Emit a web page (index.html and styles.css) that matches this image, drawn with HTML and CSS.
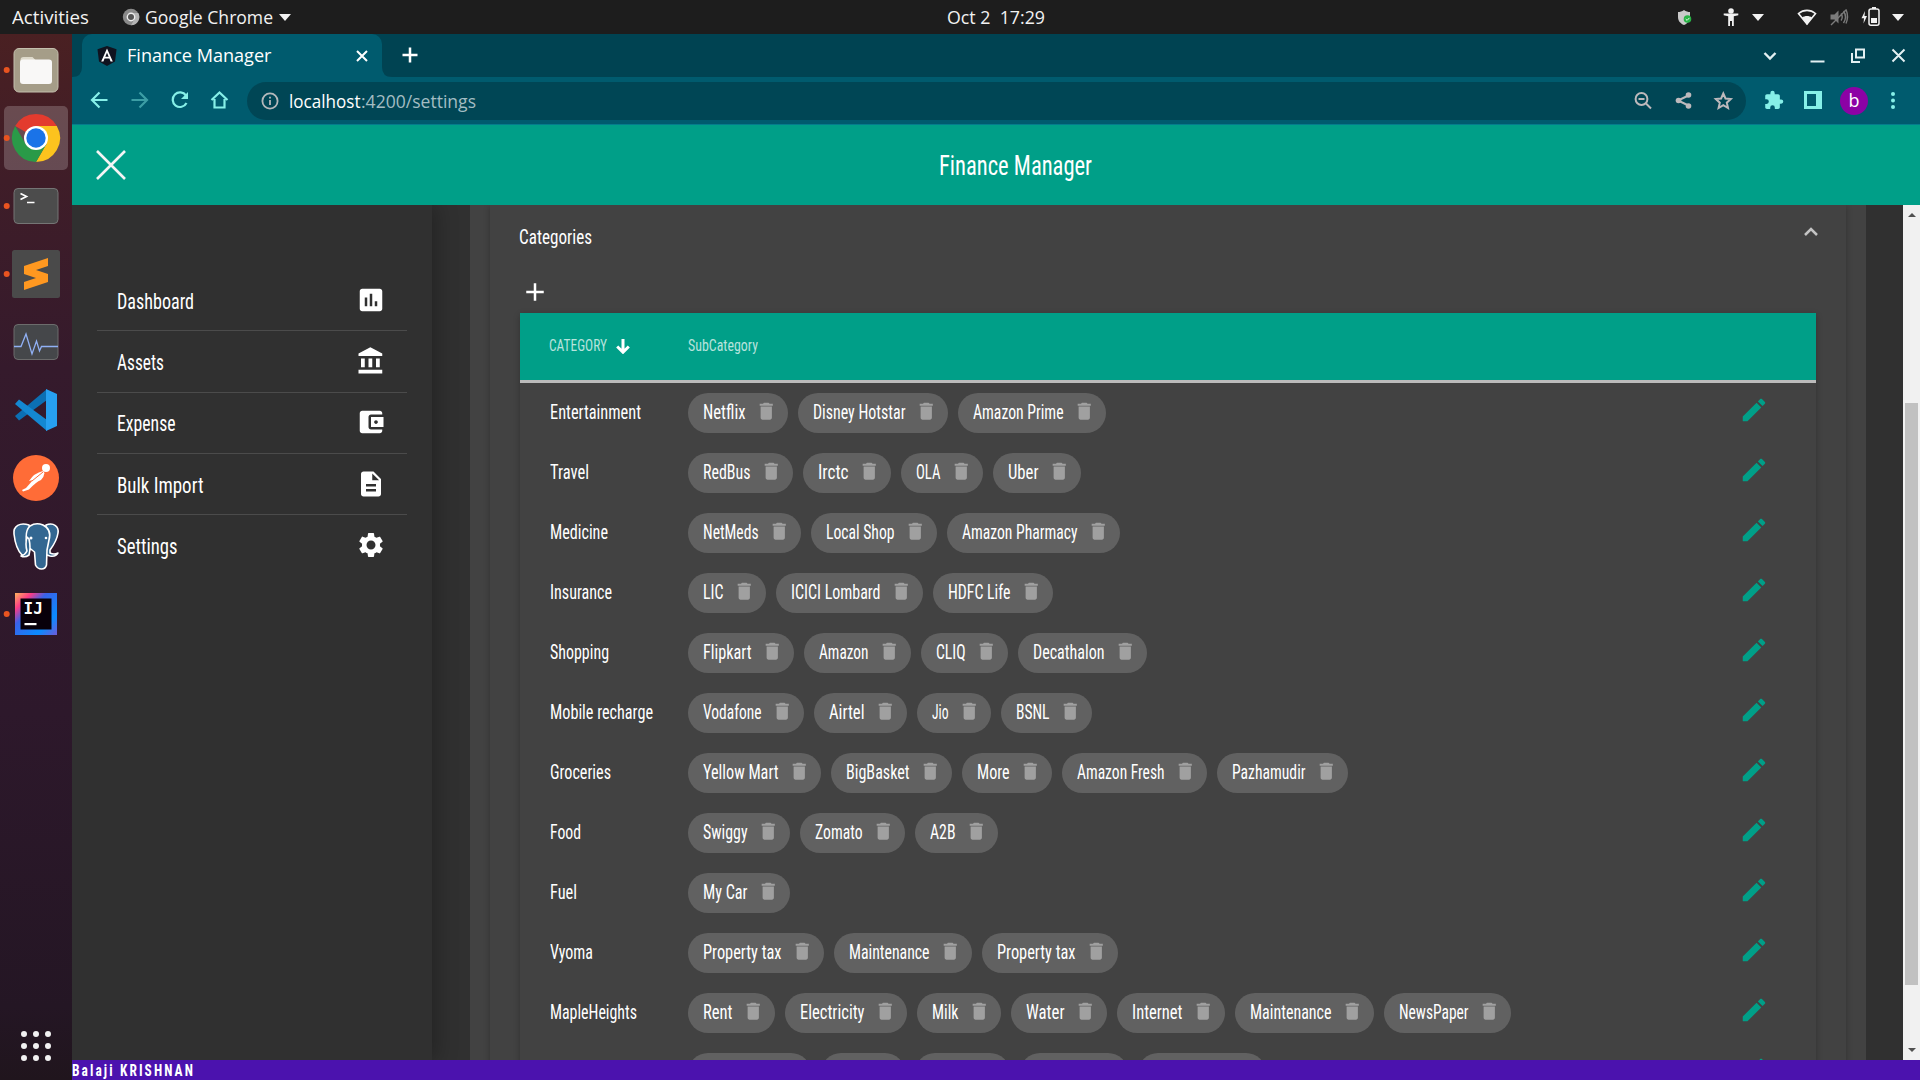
FILE: index.html
```html
<!DOCTYPE html>
<html lang="en">
<head>
<meta charset="utf-8">
<title>Finance Manager</title>
<link rel="stylesheet" href="styles.css">
</head>
<body>
<svg class="defs" width="0" height="0">
  <symbol id="trash" viewBox="0 0 24 24"><path d="M6 19c0 1.100.9 2 2 2h8c1.100 0 2-.9 2-2V7H6v12zM19 4h-3.500l-1-1h-5l-1 1H5v2h14V4z"/></symbol>
  <symbol id="pencil" viewBox="0 0 24 24"><path d="M3 17.250V21h3.750L17.810 9.940l-3.750-3.750L3 17.250zM20.710 7.040c.39-.39.39-1.020 0-1.410l-2.340-2.340c-.39-.39-1.020-.39-1.410 0l-1.830 1.830 3.750 3.750 1.830-1.830z"/></symbol>
</svg>

<header class="topbar">
  <span class="fit activities" data-w="77">Activities</span>
  <svg class="chromium" viewBox="0 0 18 18"><circle cx="9" cy="9" r="8.200" fill="#8a8a8a"/><path d="M9 5h7.300A8.200 8.200 0 0 1 9 17.200L12.500 11z" fill="#b4b4b4"/><circle cx="9" cy="9" r="4.400" fill="#eee"/><circle cx="9" cy="9" r="3" fill="#555"/></svg>
  <span class="fit" data-w="128">Google Chrome</span>
  <svg class="caret" viewBox="0 0 12 7"><path d="M0 0h12L6 7z"/></svg>
  <span class="fit clock" data-w="98">Oct 2&nbsp; 17:29</span>
  <svg class="tray" viewBox="1670 0 250 34">
    <path d="M1684 10c-2 1.500-4 2-6 2v5c0 4 2.500 6.500 6 8 3.500-1.500 6-4 6-8v-5c-2 0-4-.5-6-2z" fill="#c9c9c9"/>
    <circle cx="1687.500" cy="19" r="3.800" fill="#28b446"/><path d="M1685.700 19l1.400 1.400 2.300-2.500" stroke="#e8ffe8" fill="none"/>
    <g fill="#f2f2f2"><circle cx="1731" cy="11" r="2.800"/><path d="M1723.700 13.500h14.600v1.800l-4.500 1v9.700h-1.800v-5h-2v5h-1.800v-9.700l-4.500-1z"/>
    <path d="M1752 14h12l-6 7zM1892 14h12l-6 7z"/>
    <path d="M1802 17.500c3-2 7-2 10 0l-5 7.500z"/></g>
    <path d="M1798.500 13.500c5-4.200 12-4.200 17 0L1807 24z" fill="none" stroke="#f2f2f2" stroke-width="1.600"/>
    <g fill="#7b7b7b" stroke="#7b7b7b"><path d="M1830.500 14.500h4l4-4v13l-4-4h-4z" stroke="none"/><path d="M1841 13.500q2.500 3.500 0 7M1843.500 11q4 6 0 12M1846 9.500q3 7 0 14M1831 25l15.500-15.500" fill="none" stroke-width="1.400"/></g>
    <path d="M1865 11l-3.500 7.300h2.500l-.5 5.200 3.500-7.500h-2.500z" fill="#f2f2f2"/>
    <rect x="1869" y="9" width="10" height="16.200" rx="2" fill="none" stroke="#f2f2f2" stroke-width="1.500"/><path d="M1872 7h4v2h-4zM1871 18h6v5h-6z" fill="#f2f2f2"/>
  </svg>
</header>

<div class="desktop">
<nav class="dock">
  <svg viewBox="-36 -34 72 68"><circle class="dot" cx="-29.300" r="3"/><rect x="-22" y="-21.500" width="44" height="43.500" rx="5" fill="#a59d88" stroke="#c4bfae"/><path d="M-15.500-10q0-3 3-3h9l3 3h13v6h-28z" fill="#dedacb"/><rect x="-16" y="-10.500" width="32" height="24.500" rx="3" fill="#f9f8f7"/></svg>
  <svg viewBox="-36 -34 72 68"><rect x="-32" y="-32" width="64" height="64" rx="5" fill="#fff" opacity=".2"/><circle class="dot" cx="-29.300" r="3"/>
    <path d="M0 0L-20.800-12A24 24 0 0 1 20.800-12z" fill="#e33b2e"/><path d="M0-12H20.800A24 24 0 0 1 0 24L10.400 6z" fill="#fcc31e"/><path d="M-20.800-12A24 24 0 0 0 0 24L10.400 6-10.400 6z" fill="#2a9a48"/><circle r="12" fill="#fff"/><circle r="9.700" fill="#1a73e8"/></svg>
  <svg viewBox="-36 -34 72 68"><circle class="dot" cx="-29.300" r="3"/><rect x="-22" y="-17.500" width="44" height="35" rx="4" fill="#4c4c4c" stroke="#757575"/><path d="M-15.500-12.500l6 3-6 3M-9-3.500h7.500" fill="none" stroke="#fff" stroke-width="1.700"/></svg>
  <svg viewBox="-36 -34 72 68"><circle class="dot" cx="-29.300" r="3"/><rect x="-24" y="-24" width="48" height="48" rx="2.500" fill="#4a4a4a"/><path d="M-12-8L12-16v8L0-4 12 0V8L-12 16V8L0 4-12 0z" fill="#ff9820"/></svg>
  <svg viewBox="-36 -34 72 68"><rect x="-22" y="-17.500" width="44" height="35" rx="4" fill="#45474a" stroke="#6c6c6c"/><path d="M-22 4.500h7l5-12.500 6 20 4.500-13 3 10 2-4.500H22" fill="none" stroke="#91b1f5" stroke-width="1.300"/></svg>
  <svg viewBox="-36 -34 72 68"><path d="M-21 6l4 4.500L11-10v-11z" fill="#0c6fb3"/><path d="M-21-6l4-4.500L11 10v11z" fill="#1488d2"/><path d="M10-21l11 5v32l-11 5z" fill="#27a0f0"/></svg>
  <svg viewBox="-36 -34 72 68"><circle r="23" fill="#ff6c37"/><circle cx="10" cy="-10" r="4" fill="#fff"/><path d="M7-7Q-2-5-7 3l4-1-7 8-4 2 1 1.500 6-2Q0 4 5 2q3-3 3.500-7z" fill="#fff"/><path d="M-4 3L7-6" stroke="#ff6c37" stroke-width="1"/></svg>
  <svg viewBox="-36 -33 72 68"><g fill="#336791" stroke="#fff" stroke-width="1.600" stroke-linejoin="round"><path d="M10-20c8-3 13 2 12 8-1 7-5 13-8 17v3q4 2 8 0-2 4-8 3l-6-2z"/><path d="M-7-20c-9-3-16 1-15 9 1 9 4 17 8 21 3 2 5-1 7-4l4-6z"/><path d="M-6-19q6-4 13-1c6 3 8 8 6 15l-2 10-.5 15q-1 4-5 4t-6-4l-1-13-5-4c-4-5-5-17 .5-22z"/><path d="M-9-8q-2 7 0 14-2 4-6 5 4 2 8-1 2-7 0-16z"/></g><circle cx="-5" cy="-7" r="1.500" fill="#fff"/><circle cx="10" cy="-7" r="1.300" fill="#fff"/></svg>
  <svg viewBox="-36 -34 72 68"><defs><linearGradient id="ij" x2="1" y2="1"><stop offset="0" stop-color="#ffb35c"/><stop offset=".2" stop-color="#fb3c86"/><stop offset=".38" stop-color="#3a62e8"/><stop offset=".75" stop-color="#0a8bff"/><stop offset="1" stop-color="#6f5bd8"/></linearGradient></defs><circle class="dot" cx="-29.300" r="3"/><rect x="-21" y="-21" width="42" height="42" fill="url(#ij)"/><rect x="-15.500" y="-15.500" width="31" height="31" fill="#08000a"/><text x="-12.500" y="-.5" class="ij">IJ</text><rect x="-11.500" y="9" width="12" height="2.200" fill="#fff"/></svg>
  <svg class="apps" viewBox="-36 -34 72 68"><path d="M-12-12h0M0-12h0M12-12h0M-12 0h0M0 0h0M12 0h0M-12 12h0M0 12h0M12 12h0"/></svg>
</nav>

<div class="window">
  <div class="tabstrip">
    <svg class="foot" viewBox="0 0 10 10"><path d="M10 0v10H0Q10 10 10 0z"/></svg>
    <div class="tab">
      <svg class="angular" viewBox="0 0 20 20"><path d="M10 0l9.500 3.200-1.500 12.300L10 20l-8-4.500L.5 3.200z" fill="#10131f"/><path d="M10 2.500L4.200 15.500h2.200l1.200-3h4.800l1.200 3h2.200zm0 4.200l1.700 4H8.300z" fill="#fff"/></svg>
      <span class="fit" data-w="144.500">Finance Manager</span>
      <svg class="tabx" viewBox="0 0 10 10"><path d="M0 0l10 10M10 0L0 10"/></svg>
    </div>
    <svg class="foot" viewBox="0 0 10 10"><path d="M0 0v10h10Q0 10 0 0z"/></svg>
    <svg class="newtab" viewBox="0 0 16 16"><path d="M8 .5v15M.5 8h15"/></svg>
    <svg class="wincontrols" viewBox="1750 34 170 43"><path d="M1764.500 53l5.500 5.500 5.500-5.500" stroke-width="2.400"/><path d="M1810.500 61.500h14M1856 49.500h8v8h-8zM1852 53v9h8M1892.500 49.500l12 12M1904.500 49.500l-12 12"/></svg>
  </div>
  <div class="toolbar">
    <svg class="navicons" viewBox="84 77 152 47"><path d="M107.500 100H92.500m7-7.500l-7.500 7.500 7.500 7.500"/><path d="M131.500 100h15m-7-7.500l7.500 7.500-7.500 7.500" opacity=".45"/><path d="M186 95.500a7.300 7.300 0 1 0 .5 7.500"/><path d="M188 92v7h-7z" fill="#86f0e8" stroke="none"/><path d="M211.500 100l8-7.500 8 7.500M214.500 99v8.500h10V99"/></svg>
    <div class="omnibox">
      <svg class="info" viewBox="0 0 18 18"><circle cx="9" cy="9" r="7.600"/><path d="M9 8v5M9 4.700v1.800"/></svg>
      <span class="fit host" data-w="71.500">localhost</span><span class="fit path" data-w="115">:4200/settings</span>
      <svg class="omniicons" viewBox="1630 82 110 38"><g fill="none" stroke="#bdb9bc" stroke-width="2"><circle cx="1641.500" cy="99" r="5.900"/><path d="M1646 103.500l5 5M1638.500 99h6M1689.500 95l-11.500 5.500 11.500 5.500" /><path d="M1723.300 93.500l2.200 5 5.300.5-4 3.700 1.200 5.300-4.700-2.800-4.700 2.800 1.200-5.300-4-3.700 5.300-.5z"/></g><g fill="#bdb9bc"><circle cx="1678.500" cy="100.500" r="2.800"/><circle cx="1688.500" cy="95" r="2.800"/><circle cx="1688.500" cy="106" r="2.800"/></g></svg>
    </div>
    <svg class="exticons" viewBox="1746 77 174 47"><g fill="#86f0e8"><g transform="translate(1763.500 90) scale(.86)"><path d="M20.500 11H19V7c0-1.100-.9-2-2-2h-4V3.500a2.500 2.500 0 0 0-5 0V5H4c-1.100 0-2 .9-2 2v3.800h1.500a2.700 2.700 0 0 1 0 5.400H2V20c0 1.100.9 2 2 2h3.800v-1.500a2.700 2.700 0 0 1 5.400 0V22H17c1.100 0 2-.9 2-2v-4h1.500a2.500 2.500 0 0 0 0-5z"/></g><path fill-rule="evenodd" d="M1804 91h18v18h-18zM1807 94v12h9v-12z"/><circle cx="1893" cy="94" r="2"/><circle cx="1893" cy="100.500" r="2"/><circle cx="1893" cy="107" r="2"/></g><circle cx="1854" cy="101" r="14" fill="#8c02a5"/><text x="1854" y="107" class="avatar">b</text></svg>
  </div>

  <div class="appbar">
    <svg class="close" viewBox="0 0 30 30"><path d="M1 1l28 28M29 1L1 29"/></svg>
    <span class="fit" data-w="153">Finance Manager</span>
  </div>

  <div class="body">
    <aside class="drawer">
      <a><span class="fit" data-w="77">Dashboard</span><svg viewBox="0 0 24 24"><path d="M19 3H5c-1.100 0-2 .9-2 2v14c0 1.100.9 2 2 2h14c1.100 0 2-.9 2-2V5c0-1.100-.9-2-2-2zM9 17H7v-7h2v7zm4 0h-2V7h2v10zm4 0h-2v-4h2v4z"/></svg></a>
      <a><span class="fit" data-w="47">Assets</span><svg viewBox="0 0 24 24"><path d="M4 10v7h3v-7H4zm6 0v7h3v-7h-3zM2 22h19v-3H2v3zm14-12v7h3v-7h-3zm-4.500-9L2 6v2h19V6l-9.500-5z"/></svg></a>
      <a><span class="fit" data-w="58.500">Expense</span><svg viewBox="0 0 24 24"><path d="M21 18v1c0 1.100-.9 2-2 2H5c-1.110 0-2-.9-2-2V5c0-1.100.89-2 2-2h14c1.100 0 2 .9 2 2v1h-9c-1.110 0-2 .9-2 2v8c0 1.100.89 2 2 2h9zm-9-2h10V8H12v8zm4-2.500c-.83 0-1.500-.67-1.500-1.500s.67-1.500 1.500-1.500 1.500.67 1.500 1.500-.67 1.500-1.500 1.500z"/></svg></a>
      <a><span class="fit" data-w="86.500">Bulk Import</span><svg viewBox="0 0 24 24"><path d="M14 2H6c-1.100 0-1.990.9-1.990 2L4 20c0 1.100.89 2 1.990 2H18c1.100 0 2-.9 2-2V8l-6-6zm2 16H8v-2h8v2zm0-4H8v-2h8v2zm-3-5V3.500L18.500 9H13z"/></svg></a>
      <a><span class="fit" data-w="60.500">Settings</span><svg viewBox="0 0 24 24"><path d="M19.140 12.940c.04-.3.06-.61.06-.94 0-.32-.02-.64-.07-.94l2.030-1.580c.18-.14.23-.41.12-.61l-1.920-3.320c-.12-.22-.37-.29-.59-.22l-2.390.96c-.5-.38-1.030-.7-1.620-.94l-.36-2.540c-.04-.24-.24-.41-.48-.41h-3.840c-.24 0-.43.17-.47.41l-.36 2.540c-.59.24-1.130.57-1.620.94l-2.390-.96c-.22-.08-.47 0-.59.22L2.740 8.870c-.12.21-.08.47.12.61l2.030 1.580c-.05.3-.09.63-.09.94s.02.64.07.94l-2.030 1.580c-.18.14-.23.41-.12.61l1.920 3.320c.12.22.37.29.59.22l2.390-.96c.5.38 1.030.7 1.620.94l.36 2.540c.05.24.24.41.48.41h3.840c.24 0 .44-.17.47-.41l.36-2.540c.59-.24 1.130-.56 1.620-.94l2.390.96c.22.08.47 0 .59-.22l1.920-3.320c.12-.22.07-.47-.12-.61l-2.010-1.580zM12 15.600c-1.980 0-3.600-1.620-3.600-3.600s1.620-3.600 3.600-3.600 3.600 1.620 3.600 3.600-1.620 3.600-3.600 3.600z"/></svg></a>
    </aside>

    <main class="content">
      <section class="card">
        <div class="panel">
          <div class="panel-head"><span class="fit" data-w="73">Categories</span><svg viewBox="0 0 14 9"><path d="M1 8l6-6 6 6"/></svg></div>
          <svg class="add" viewBox="0 0 24 24"><path d="M19 13h-6v6h-2v-6H5v-2h6V5h2v6h6v2z"/></svg>
          <div class="table">
            <div class="thead"><div class="cat"><span class="fit" data-w="58">CATEGORY</span><svg viewBox="0 0 14 15"><path d="M7 0v12M1.200 7.500L7 13.200l5.800-5.700"/></svg></div><span class="fit" data-w="70">SubCategory</span></div>
            <div id="rows"></div>
          </div>
        </div>
      </section>
    </main>

    <div class="scrollbar"><svg viewBox="0 0 8 4"><path d="M0 4l4-4 4 4z"/></svg><div class="track"><i></i></div><svg viewBox="0 0 8 4"><path d="M0 0l4 4 4-4z"/></svg></div>
  </div>
  <footer><span class="fit" data-w="123">Balaji KRISHNAN</span></footer>
</div>
</div>
<script src="app.js"></script>
</body>
</html>
```
FILE: styles.css
```css
* { box-sizing: border-box; }
body { margin: 0; width: 1920px; height: 1080px; overflow: hidden; background: #303030; color: #fff; display: flex; flex-direction: column; font-family: Roboto, "Open Sans", sans-serif; font-stretch: 75%; font-weight: 450; }
svg { display: block; flex: none; }
.defs { display: none; }
.fit { display: inline-block; flex: none; white-space: pre; }
.fit > span { display: inline-block; transform-origin: 0 50%; }

.topbar { height: 34px; flex: none; background: #1d1d1d; display: flex; align-items: center; padding-left: 12px; font: 18px/34px "Open Sans", "Noto Sans", sans-serif; color: #f2f2f2; }
.chromium { width: 18px; height: 18px; margin: 0 5px 0 33px; }
.caret { width: 12px; height: 7px; margin-left: 6px; fill: #f2f2f2; }
.clock { margin-left: 656px; }
.tray { width: 250px; height: 34px; margin-left: auto; }

.desktop { display: flex; flex: 1; min-height: 0; }
.dock { width: 72px; flex: none; padding-top: 2px; display: flex; flex-direction: column; background: linear-gradient(#4a2022, #3f1d28 14%, #351a2c 32%, #2d182b 65%, #241624 93%, #20151d); }
.dock svg { width: 72px; height: 68px; }
.dock .dot { fill: #e95420; }
.dock .apps { margin-top: auto; }
.apps path { stroke: #f2f2f2; stroke-width: 6; stroke-linecap: round; }
.ij { font: bold 16px "DejaVu Sans Mono", monospace; fill: #fff; }

.window { flex: 1; display: flex; flex-direction: column; min-width: 0; }
.tabstrip { height: 43px; flex: none; background: #004352; display: flex; align-items: center; font: 18px/43px "Open Sans", sans-serif; }
.foot { width: 10px; height: 10px; align-self: flex-end; fill: #005b6e; }
.tab { width: 300px; height: 43px; background: #005b6e; border-radius: 10px 10px 0 0; display: flex; align-items: center; padding: 0 15px; }
.angular { width: 20px; height: 20px; margin-right: 10px; }
.tabx { width: 10px; height: 10px; margin-left: auto; overflow: visible; stroke: #fff; stroke-width: 2; }
.newtab { width: 16px; height: 16px; margin: 0 0 1px 10px; stroke: #fff; stroke-width: 2.5; }
.wincontrols { width: 170px; height: 43px; margin-left: auto; fill: none; stroke: #e3f0f2; stroke-width: 2; }
.toolbar { height: 48px; flex: none; background: #005b6e; border-bottom: 1px solid #057c8c; display: flex; align-items: center; padding-left: 12px; }
.navicons { width: 152px; height: 47px; fill: none; stroke: #86f0e8; stroke-width: 2.2; }
.omnibox { width: 1499px; height: 38px; margin-left: 11px; border-radius: 19px; background: #004655; display: flex; align-items: center; padding: 0 6px 0 14px; font: 18px/38px "Open Sans", sans-serif; }
.info { width: 18px; height: 18px; margin-right: 10px; fill: none; stroke: #b5b9bc; stroke-width: 1.8; }
.path { color: #a3bdc3; }
.omniicons { width: 110px; height: 38px; margin-left: auto; }
.exticons { width: 174px; height: 47px; }
.avatar { font: 18px "Open Sans", sans-serif; fill: #fff; text-anchor: middle; }

.appbar { height: 80px; flex: none; background: #009f88; display: flex; align-items: center; padding-left: 24px; font-size: 27px; }
.close { width: 30px; height: 30px; stroke: #f4f4f4; stroke-width: 2.6; }
.appbar .fit { margin: 1px 0 0 813px; }

.body { flex: 1; min-height: 0; display: flex; overflow: hidden; }
.drawer { width: 360px; flex: none; padding: 65px 25px 0; background: #303030; box-shadow: 4px 0 20px rgba(0,0,0,.28); font-size: 22px; z-index: 1; }
.drawer a { height: 61.3px; display: flex; align-items: center; justify-content: space-between; padding: 0 21px 0 20px; border-bottom: 1px solid #4b4b4b; }
.drawer a:last-child { border: 0; }
.drawer .fit { margin-top: 2px; }
.drawer svg { width: 30px; height: 30px; fill: #fff; margin-bottom: 1px; }

.content { flex: 1; padding: 0 37px 0 38px; }
.card { height: 900px; padding: 0 20px; background: #424242; }
.panel { height: 900px; padding: 0 30px; background: #424242; box-shadow: 0 2px 6px rgba(0,0,0,.28); }
.panel-head { height: 64px; display: flex; justify-content: space-between; align-items: center; font-size: 20px; }
.panel-head .fit { margin-left: -1px; }
.panel-head svg { width: 14px; height: 9px; margin: 0 -2px 12px 0; fill: none; stroke: #c4c4c4; stroke-width: 2.5; }
.add { width: 30px; height: 30px; margin: 8px 0 6px -.5px; fill: #fff; }
.table { width: 1296px; box-shadow: 0 2px 6px rgba(0,0,0,.25); }
.thead { height: 70px; display: flex; align-items: center; padding: 0 29px 3px; background: #009f88; border-bottom: 3px solid #bbb; font-size: 17px; }
.thead .fit { color: rgba(255,255,255,.72); }
.cat { width: 139px; flex: none; display: flex; align-items: center; }
.cat svg { width: 14px; height: 15px; margin: 2px 0 0 9px; fill: none; stroke: #fff; stroke-width: 3; }
.row { height: 60px; display: flex; align-items: center; padding-left: 29px; font-size: 20px; }
.chips { flex: 1; display: flex; gap: 10px; }
.chip { height: 40px; border-radius: 20px; background: #616161; display: flex; align-items: center; padding-left: 15px; }
.chip svg { width: 22.5px; height: 22.5px; margin: 0 10.7px 3px auto; fill: #a0a0a0; }
.chip .fit, .cat .fit { line-height: 24px; }
.row .fit { margin-bottom: 2px; }
.row .cat .fit { margin-left: .5px; }
.edit { width: 30px; height: 30px; margin: 0 47px 6px 0; fill: #009f88; }

.scrollbar { width: 17px; flex: none; background: #f1f1f1; display: flex; flex-direction: column; align-items: center; padding: 8px 0; }
.scrollbar svg { width: 8px; height: 4px; fill: #505050; }
.track { flex: 1; width: 13px; padding-top: 186px; }
.track i { display: block; height: 582px; background: #c1c1c1; }
footer { height: 20px; flex: none; background: #4b12ae; font-size: 16px; line-height: 21px; font-weight: 700; letter-spacing: 2.5px; }
```
FILE: app.js
```js
// Each row: category, its label width, then [subcategory, chip width] pairs.
const rows = [
  ["Entertainment", 91, ["Netflix", 100], ["Disney Hotstar", 150], ["Amazon Prime", 148]],
  ["Travel", 39, ["RedBus", 105], ["Irctc", 88], ["OLA", 82], ["Uber", 88]],
  ["Medicine", 58, ["NetMeds", 113], ["Local Shop", 126], ["Amazon Pharmacy", 173]],
  ["Insurance", 62, ["LIC", 78], ["ICICI Lombard", 147], ["HDFC Life", 120]],
  ["Shopping", 59, ["Flipkart", 106], ["Amazon", 107], ["CLIQ", 87], ["Decathalon", 129]],
  ["Mobile recharge", 103, ["Vodafone", 116], ["Airtel", 93], ["Jio", 74], ["BSNL", 91]],
  ["Groceries", 61, ["Yellow Mart", 133], ["BigBasket", 121], ["More", 90], ["Amazon Fresh", 145], ["Pazhamudir", 131]],
  ["Food", 31, ["Swiggy", 102], ["Zomato", 105], ["A2B", 83]],
  ["Fuel", 27, ["My Car", 102]],
  ["Vyoma", 43, ["Property tax", 136], ["Maintenance", 138], ["Property tax", 136]],
  ["MapleHeights", 87, ["Rent", 87], ["Electricity", 122], ["Milk", 84], ["Water", 96], ["Internet", 108], ["Maintenance", 139], ["NewsPaper", 127]],
  ["", 0, ["", 123], ["", 84], ["", 95], ["", 108], ["", 128]],
];

const label = (text, w) => text ? `<span class="fit" data-w="${w}">${text}</span>` : "";

document.getElementById("rows").innerHTML = rows.map(([name, w, ...chips]) =>
  `<div class="row"><div class="cat">${label(name, w)}</div><div class="chips">` +
  chips.map(([t, cw]) => `<div class="chip" style="width:${cw}px">${label(t, cw - 57.5)}<svg><use href="#trash"/></svg></div>`).join("") +
  `</div><svg class="edit"><use href="#pencil"/></svg></div>`).join("");

// Condense every label horizontally to its set width.
document.querySelectorAll(".fit").forEach(el => {
  const inner = document.createElement("span");
  inner.textContent = el.textContent;
  el.replaceChildren(inner);
  const natural = inner.getBoundingClientRect().width;
  el.style.width = el.dataset.w + "px";
  inner.style.transform = `scaleX(${el.dataset.w / natural})`;
});
```
